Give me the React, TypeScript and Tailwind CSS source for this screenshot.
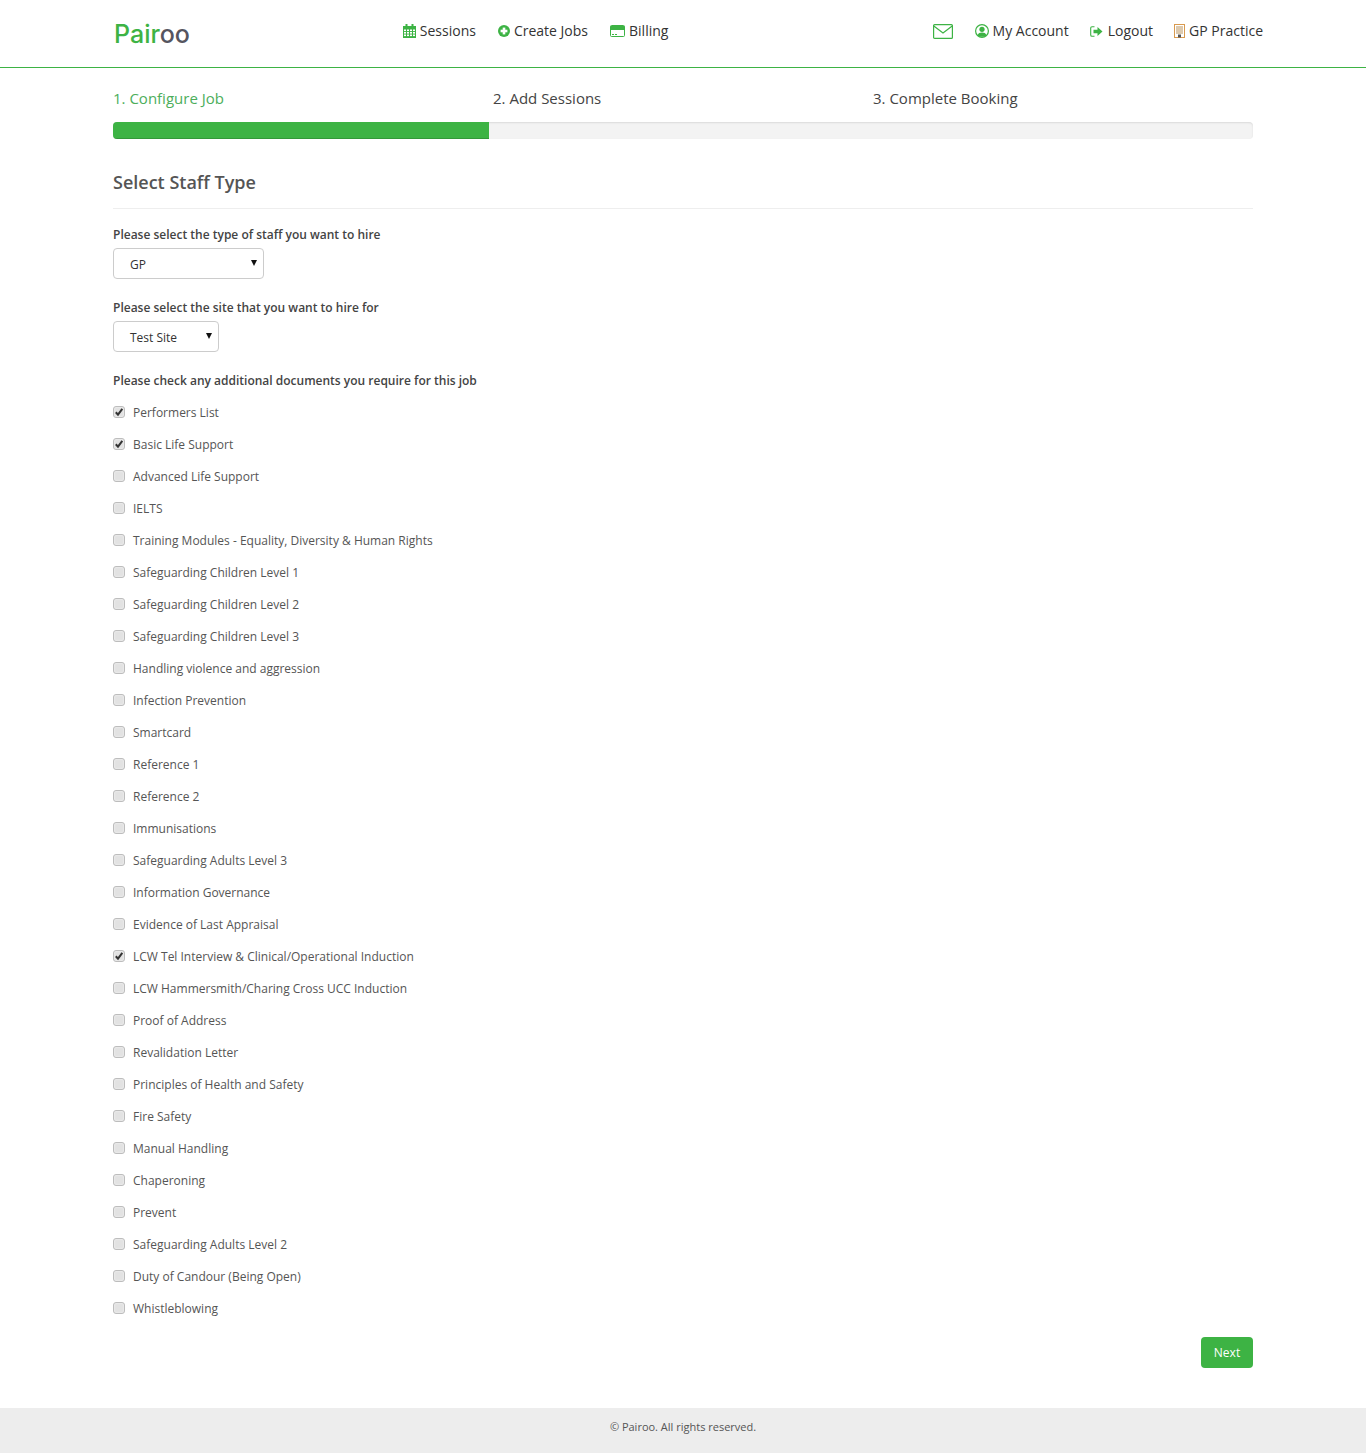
import React from "react";

const docs: [string, boolean][] = [
  ["Performers List", true],
  ["Basic Life Support", true],
  ["Advanced Life Support", false],
  ["IELTS", false],
  ["Training Modules - Equality, Diversity & Human Rights", false],
  ["Safeguarding Children Level 1", false],
  ["Safeguarding Children Level 2", false],
  ["Safeguarding Children Level 3", false],
  ["Handling violence and aggression", false],
  ["Infection Prevention", false],
  ["Smartcard", false],
  ["Reference 1", false],
  ["Reference 2", false],
  ["Immunisations", false],
  ["Safeguarding Adults Level 3", false],
  ["Information Governance", false],
  ["Evidence of Last Appraisal", false],
  ["LCW Tel Interview & Clinical/Operational Induction", true],
  ["LCW Hammersmith/Charing Cross UCC Induction", false],
  ["Proof of Address", false],
  ["Revalidation Letter", false],
  ["Principles of Health and Safety", false],
  ["Fire Safety", false],
  ["Manual Handling", false],
  ["Chaperoning", false],
  ["Prevent", false],
  ["Safeguarding Adults Level 2", false],
  ["Duty of Candour (Being Open)", false],
  ["Whistleblowing", false],
];

function CalendarIcon() {
  return (
    <svg width="13" height="14" viewBox="0 0 13 14" className="shrink-0">
      <rect x="0" y="2" width="13" height="12" fill="#3db344" />
      <rect x="2.5" y="0" width="2" height="3.5" fill="#3db344" />
      <rect x="8.5" y="0" width="2" height="3.5" fill="#3db344" />
      {[1, 4, 7, 10].map((x) =>
        [5.5, 8, 10.5].map((y) => <rect key={`${x}-${y}`} x={x} y={y} width="2" height="1.6" fill="#ffffff" />)
      )}
    </svg>
  );
}

function PlusCircleIcon() {
  return (
    <svg width="12" height="12" viewBox="0 0 12 12" className="shrink-0">
      <circle cx="6" cy="6" r="6" fill="#3db344" />
      <rect x="2.6" y="4.7" width="6.8" height="2.6" fill="#ffffff" />
      <rect x="4.7" y="2.6" width="2.6" height="6.8" fill="#ffffff" />
    </svg>
  );
}

function CardIcon() {
  return (
    <svg width="15" height="12" viewBox="0 0 15 12" className="shrink-0">
      <rect x="0.5" y="0.5" width="14" height="11" rx="1" fill="#ffffff" stroke="#3db344" />
      <rect x="0.5" y="1" width="14" height="4" fill="#3db344" />
      <rect x="2" y="9" width="2" height="1" fill="#3db344" />
      <rect x="5" y="9" width="2" height="1" fill="#3db344" />
    </svg>
  );
}

function MailIcon() {
  return (
    <svg width="20" height="15" viewBox="0 0 20 15" className="shrink-0">
      <rect x="0.6" y="0.6" width="18.8" height="13.8" rx="1" fill="none" stroke="#3db344" strokeWidth="1.2" />
      <path d="M0.8 2 L10 9 L19.2 2" fill="none" stroke="#3db344" strokeWidth="1.2" />
    </svg>
  );
}

function UserCircleIcon() {
  return (
    <svg width="14" height="14" viewBox="0 0 14 14" className="shrink-0">
      <circle cx="7" cy="7" r="6.4" fill="#ffffff" stroke="#3db344" strokeWidth="1.2" />
      <circle cx="7" cy="5.3" r="2.6" fill="#3db344" />
      <path d="M2.6 11.4 C3 9 5 8.4 7 8.4 C9 8.4 11 9 11.4 11.4 C10 13.2 4 13.2 2.6 11.4 Z" fill="#3db344" />
    </svg>
  );
}

function LogoutIcon() {
  return (
    <svg width="13" height="11" viewBox="0 0 13 11" className="shrink-0">
      <path d="M4.5 0.7 H2 Q0.7 0.7 0.7 2 V9 Q0.7 10.3 2 10.3 H4.5" fill="none" stroke="#3db344" strokeWidth="1.1" />
      <path d="M3.5 3.8 H7.5 V1 L12.5 5.5 L7.5 10 V7.2 H3.5 Z" fill="#3db344" />
    </svg>
  );
}

function BuildingIcon() {
  return (
    <svg width="11" height="14" viewBox="0 0 11 14" className="shrink-0">
      <rect x="0.5" y="0.5" width="10" height="13" fill="#ffffff" stroke="#d99a4e" />
      {[2.5, 4.5, 6.5, 8.5].map((y) => (
        <rect key={y} x="2" y={y} width="7" height="1" fill="#b9935f" />
      ))}
      <rect x="4" y="10.5" width="3" height="3" fill="#555555" />
    </svg>
  );
}

function NavItem({ icon, label, gap = "gap-1" }: { icon: React.ReactNode; label: string; gap?: string }) {
  return (
    <a className={`flex items-center ${gap} text-[14px] leading-[20px] text-[#333]`}>
      {icon}
      <span>{label}</span>
    </a>
  );
}

function FakeSelect({ value, width }: { value: string; width: string }) {
  return (
    <div className={`relative h-[31px] ${width} rounded-[4px] border border-[#ccc] bg-white pl-4 text-[12px] leading-[31px] text-[#333]`}>
      {value}
      <span className="absolute right-[6px] top-[11px] h-0 w-0 border-x-[3px] border-t-[6px] border-x-transparent border-t-[#111]" />
    </div>
  );
}

function DocRow({ label, checked }: { label: string; checked: boolean }) {
  return (
    <label className="flex h-[32px] items-center">
      <span className="relative flex h-[12px] w-[12px] items-center justify-center rounded-[3px] border border-[#bdbdbd] bg-[#e2e2e2] shadow-[inset_0_0_2px_rgba(255,255,255,0.8)]">
        {checked && (
          <svg width="10" height="10" viewBox="0 0 10 10">
            <path d="M1.8 5.2 L4 7.6 L8.3 1.9" fill="none" stroke="#333" strokeWidth="2" />
          </svg>
        )}
      </span>
      <span className="ml-2 text-[12px] leading-[17px] text-[#555]">{label}</span>
    </label>
  );
}

export default function App() {
  return (
    <div className="flex min-h-[1453px] flex-col bg-white font-['Open_Sans',sans-serif] text-[#333]">
      <header className="h-[68px] border-b border-[#3db344]">
        <div className="relative mx-auto flex h-[67px] w-[1140px] items-start">
          <div className="ml-[1px] mt-[17px] font-['Inter',sans-serif] text-[25px] font-medium leading-[34px]">
            <span className="text-[#3db344]">Pair</span>
            <span className="text-[#55555f]">oo</span>
          </div>
          <nav className="ml-[213px] mt-[21px] flex gap-[22px]">
            <NavItem icon={<CalendarIcon />} label="Sessions" />
            <NavItem icon={<PlusCircleIcon />} label="Create Jobs" />
            <NavItem icon={<CardIcon />} label="Billing" />
          </nav>
          <nav className="ml-auto mr-[-10px] mt-[21px] flex items-center gap-[21px]">
            <span className="mr-[1px]">
              <MailIcon />
            </span>
            <NavItem icon={<UserCircleIcon />} label="My Account" />
            <NavItem icon={<LogoutIcon />} label="Logout" gap="gap-[5px]" />
            <NavItem icon={<BuildingIcon />} label="GP Practice" />
          </nav>
        </div>
      </header>

      <main className="mx-auto w-[1140px] flex-1">
        <div className="mt-[19px] grid grid-cols-3 text-[15px] leading-[22px] text-[#444]">
          <div className="text-[#4cae5b]">1. Configure Job</div>
          <div>2. Add Sessions</div>
          <div>3. Complete Booking</div>
        </div>
        <div className="mt-[13px] h-[17px] overflow-hidden rounded-[4px] bg-[#f3f3f3] shadow-[inset_0_1px_2px_rgba(0,0,0,0.1)]">
          <div className="h-full w-[376px] bg-[#3db344] shadow-[inset_0_-1px_0_rgba(0,0,0,0.15)]" />
        </div>

        <h2 className="mt-[31px] border-b border-[#eee] pb-[13px] text-[18px] font-semibold leading-[25px] text-[#555]">
          Select Staff Type
        </h2>

        <p className="mt-[17px] text-[12px] font-semibold leading-[17px] text-[#444]">
          Please select the type of staff you want to hire
        </p>
        <div className="mt-[5px]">
          <FakeSelect value="GP" width="w-[151px]" />
        </div>

        <p className="mt-[20px] text-[12px] font-semibold leading-[17px] text-[#444]">
          Please select the site that you want to hire for
        </p>
        <div className="mt-[5px]">
          <FakeSelect value="Test Site" width="w-[106px]" />
        </div>

        <p className="mt-[20px] text-[12px] font-semibold leading-[17px] text-[#444]">
          Please check any additional documents you require for this job
        </p>

        <div className="mt-[7px]">
          {docs.map(([label, checked]) => (
            <DocRow key={label} label={label} checked={checked} />
          ))}
        </div>

        <div className="mt-[13px] flex justify-end">
          <button className="h-[31px] w-[52px] rounded-[4px] bg-[#3db344] text-[12px] font-normal text-white">
            Next
          </button>
        </div>
      </main>

      <footer className="mt-[40px] h-[45px] bg-[#ededed] pt-[10px] text-center text-[11px] leading-[18px] text-[#555]">
        © Pairoo. All rights reserved.
      </footer>
    </div>
  );
}
